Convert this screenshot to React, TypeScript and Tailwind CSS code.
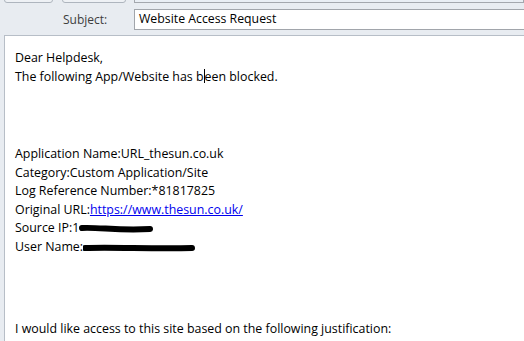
export default function App() {
  const body = { fontFamily: '"Open Sans", "Noto Sans", sans-serif' };

  return (
    <div className="w-[524px] h-[341px] overflow-hidden bg-[#e8ecf1]" style={body}>
      {/* bottoms of the toolbar buttons and the field above */}
      <div className="flex items-end h-[3px] overflow-hidden">
        <div className="ml-[4px] w-[49px] h-[20px] shrink-0 rounded-b-[3px] border border-[#aeb5be] bg-[#eef1f5]" />
        <div className="ml-[9px] w-[64px] h-[20px] shrink-0 rounded-b-[3px] border border-[#aeb5be] bg-[#eef1f5]" />
        <div className="ml-[8px] flex-1 h-[20px] border border-[#a3a7ad] bg-[#e9eef4]" />
      </div>

      {/* subject row */}
      <div className="flex items-center h-[25px] mt-[4px]">
        <div className="w-[134px] shrink-0 pl-[63px] text-[12px] text-[#3d3d3d]">Subject:</div>
        <div className="flex-1 h-[21px] border border-[#a1a5ab] border-r-0 bg-white flex items-center pl-[4px] text-[12.3px] text-black">
          Website Access Request
        </div>
      </div>

      {/* message body */}
      <div className="ml-[4px] mt-[3px] h-[400px] border-l border-t border-[#b7bec7] bg-white pl-[10px] pt-[13px] text-[12.4px] leading-[18.5px] text-black">
        <p>Dear Helpdesk,</p>
        <p>
          The following App/Website has b
          <span className="inline-block w-[1px] h-[14px] bg-black align-[-2px]" />
          een blocked.
        </p>
        <div className="h-[59px]" />
        <p>Application Name:URL_thesun.co.uk</p>
        <p>Category:Custom Application/Site</p>
        <p>Log Reference Number:*81817825</p>
        <p>
          Original URL:
          <span className="text-[#0000ee] underline">https://www.thesun.co.uk/</span>
        </p>
        <p className="flex items-center">
          Source IP:1
          <svg width="74" height="10" viewBox="0 0 74 10" className="mt-[1px]">
            <path d="M3 4 C 20 3, 40 7, 71 5" stroke="black" strokeWidth="6" strokeLinecap="round" fill="none" />
          </svg>
        </p>
        <p className="flex items-center">
          User Name:
          <svg width="112" height="10" viewBox="0 0 112 10" className="mt-[2px]">
            <path d="M2 5 C 30 4, 70 6, 109 5" stroke="black" strokeWidth="6" strokeLinecap="round" fill="none" />
          </svg>
        </p>
        <div className="h-[64px]" />
        <p>I would like access to this site based on the following justification:</p>
      </div>
    </div>
  );
}
